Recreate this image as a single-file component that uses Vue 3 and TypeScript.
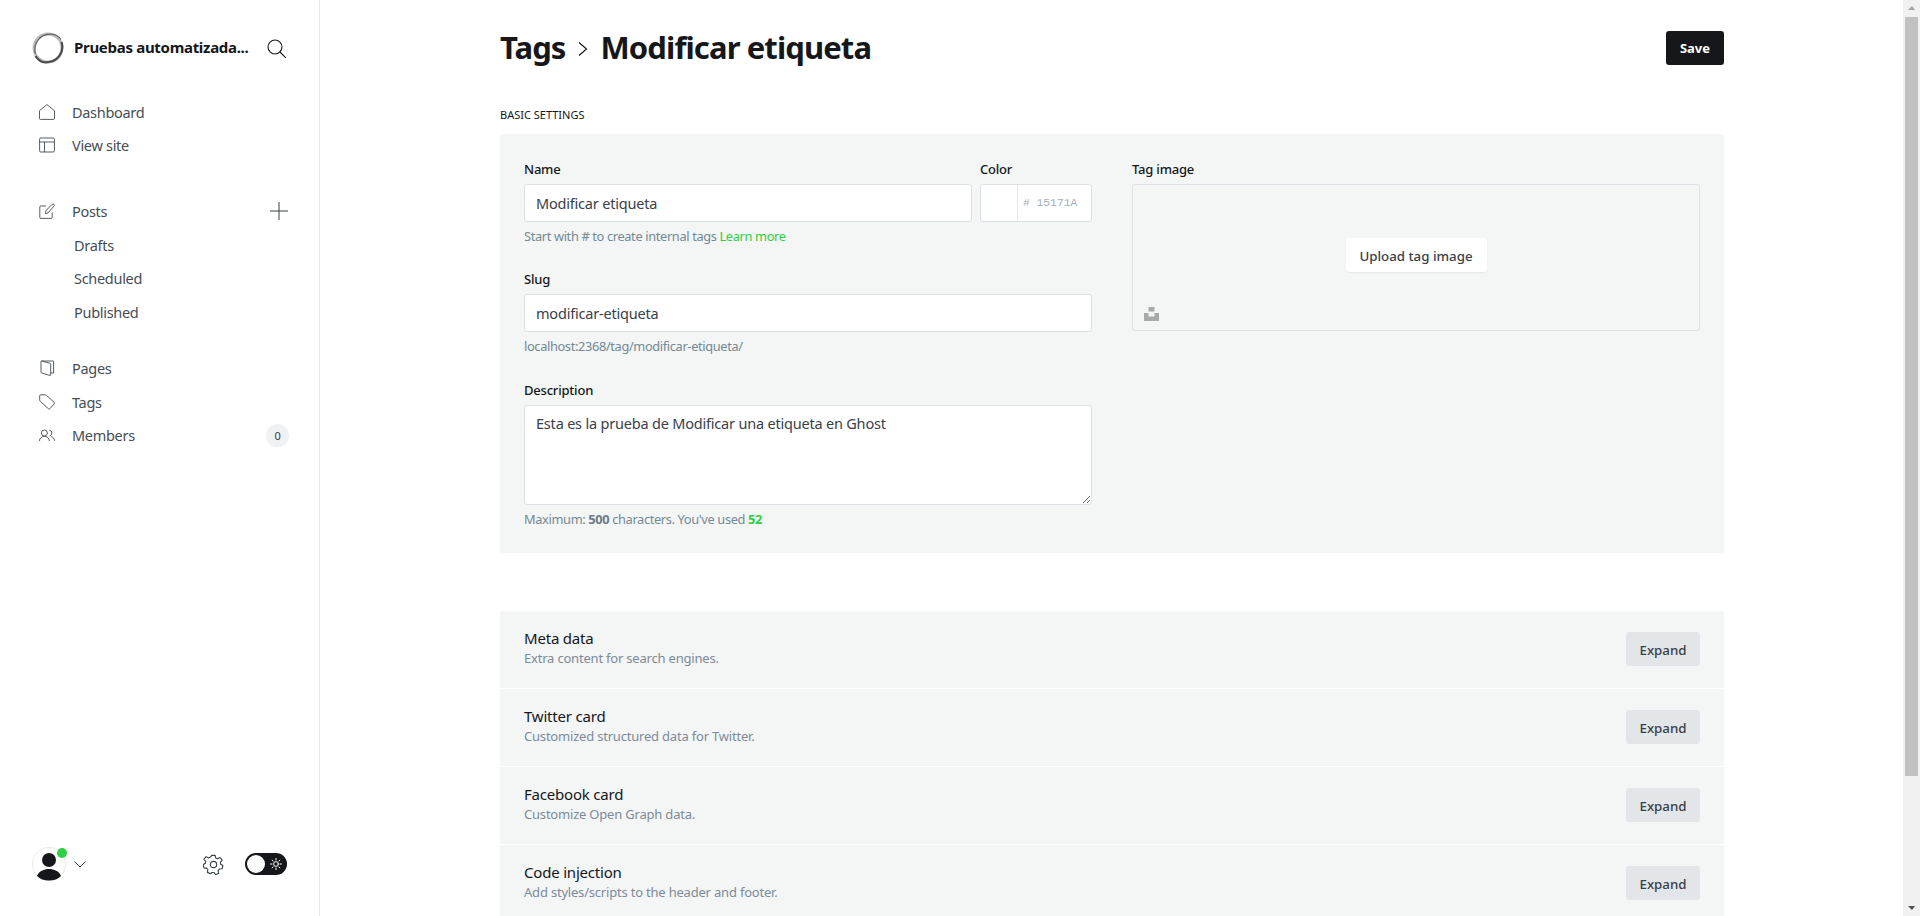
<script setup lang="ts">
interface Row { title: string; desc: string }
const rows: Row[] = [
  { title: 'Meta data', desc: 'Extra content for search engines.' },
  { title: 'Twitter card', desc: 'Customized structured data for Twitter.' },
  { title: 'Facebook card', desc: 'Customize Open Graph data.' },
  { title: 'Code injection', desc: 'Add styles/scripts to the header and footer.' },
]
const sub: string[] = ['Drafts', 'Scheduled', 'Published']
</script>

<template>
  <div class="app">
    <aside class="side">
      <div class="brand">
        <svg class="logo" width="32" height="32" viewBox="0 0 32 32" fill="none">
          <circle cx="16" cy="16" r="14" stroke="#b9b9b9" stroke-width="2.800" />
          <path d="M3.500 22C1 14 6 4 15 2.500c6-1 11 .5 14 5" stroke="#6a6a6a" stroke-width="1.300" />
          <path d="M29.500 10c3 9-3 19-13 20-5 1-10-1-13-6" stroke="#4c4c4c" stroke-width="2.200" />
        </svg>
        <span class="brand-name">Pruebas automatizada...</span>
        <svg class="search" width="19" height="19" viewBox="0 0 19 19" fill="none" stroke="#15171a" stroke-width="1.100" stroke-linecap="round">
          <circle cx="8" cy="8" r="7" />
          <path d="M13 13l5.400 5.400" />
        </svg>
      </div>

      <nav class="nav first">
        <a class="item">
          <svg class="ico" viewBox="0 0 16 16" fill="none"><path d="M.5 6.700 8 .6l7.500 6.100v7.700a1 1 0 0 1-1 1h-13a1 1 0 0 1-1-1z" /></svg>
          <span>Dashboard</span>
        </a>
        <a class="item">
          <svg class="ico" viewBox="0 0 16 16" fill="none"><rect x=".6" y="1" width="14.800" height="14" rx="1.200" /><path d="M.6 5h14.800M5.500 5v10" /></svg>
          <span>View site</span>
        </a>
      </nav>

      <nav class="nav posts">
        <a class="item">
          <svg class="ico" viewBox="0 0 16 16" fill="none"><path d="M7 3H1.800a1 1 0 0 0-1 1v10.400a1 1 0 0 0 1 1h10.400a1 1 0 0 0 1-1V9.500" /><path d="M6.500 10.600 7 7.600 13.100 1.300a1.300 1.300 0 0 1 1.800 0 1.300 1.300 0 0 1 0 1.900L8.900 10z" /></svg>
          <span>Posts</span>
          <svg class="plus" width="18" height="18" viewBox="0 0 18 18" fill="none" stroke="#394047" stroke-width="1"><path d="M9 0v18M0 9h18" /></svg>
        </a>
        <a v-for="s in sub" :key="s" class="subitem">{{ s }}</a>
      </nav>

      <nav class="nav lower">
        <a class="item">
          <svg class="ico" viewBox="0 0 16 16" fill="none"><path d="M2.500 1H14a.6.6 0 0 1 .6.6V13H11.700" /><path d="M2 1.500a.6.6 0 0 1 .8-.5L11 3.300a1 1 0 0 1 .7 1v10.500a.6.6 0 0 1-.8.6L2.800 13a1 1 0 0 1-.8-1z" /></svg>
          <span>Pages</span>
        </a>
        <a class="item">
          <svg class="ico" viewBox="0 0 16 16" fill="none"><path d="M.7 1.800A1 1 0 0 1 1.700.8h4.400a2 2 0 0 1 1.300.5l7.800 7a1 1 0 0 1 .1 1.400l-4.400 5a1 1 0 0 1-1.400.1L1.300 7.300a2 2 0 0 1-.6-1.400z" /></svg>
          <span>Tags</span>
        </a>
        <a class="item">
          <svg class="ico" viewBox="0 0 16 16" fill="none"><circle cx="5.400" cy="6" r="3" /><path d="M.5 14c0-2.800 2-4.600 4.900-4.600s5 1.800 5 4.600M10.300 3.200a2.900 2.900 0 0 1 .4 5.700M12 9.600c2 .4 3.500 2 3.500 4.200" /></svg>
          <span>Members</span>
          <span class="badge">0</span>
        </a>
      </nav>

      <div class="foot">
        <div class="avatar">
          <svg width="34" height="34" viewBox="0 0 34 34">
            <circle cx="17" cy="17" r="16.500" fill="#fff" stroke="#e8e8e8" />
            <circle cx="17" cy="13" r="7" fill="#15171a" />
            <path d="M5 29c2-5 7-7 12-7s10 2 12 7c-3 3-7 4.600-12 4.600S8 32 5 29z" fill="#15171a" />
          </svg>
          <span class="dot"></span>
        </div>
        <svg class="chev" width="12" height="7" viewBox="0 0 12 7" fill="none" stroke="#394047" stroke-width="1"><path d="m.5.5 5.500 5.500L11.500.5" /></svg>
        <svg class="gear" width="21" height="21" viewBox="0 0 24 24" fill="none" stroke="#394047" stroke-width="1.300" stroke-linejoin="round">
          <circle cx="12" cy="12" r="3.600" />
          <path d="M10.100 1.500h3.800l.6 3 2.200 1 2.700-1.500 2.500 3-2 2.300.3 2.400 2.500 1.500-.9 3.700-3 .2-1.500 1.900.6 3-3.500 1.600-1.800-2.500h-2.400L8.500 22.600 5 21l.6-3-1.500-1.900-3-.2L.2 12.200l2.500-1.500.3-2.400L1 6l2.500-3 2.700 1.500 2.200-1z" />
        </svg>
        <div class="toggle">
          <span class="knob"></span>
          <svg width="12" height="12" viewBox="0 0 12 12" fill="none" stroke="#fff" stroke-width="1" stroke-linecap="round">
            <circle cx="6" cy="6" r="2.400" />
            <path d="M6 .5v1.500M6 10v1.500M.5 6H2M10 6h1.500M2.100 2.100l1 1M8.900 8.900l1 1M2.100 9.900l1-1M8.900 3.100l1-1" />
          </svg>
        </div>
      </div>
    </aside>

    <main class="main">
      <header class="head">
        <h1 class="title">
          <span>Tags</span>
          <svg class="crumb" width="10" height="16" viewBox="0 0 10 16" fill="none" stroke="#15171a" stroke-width="1.200"><path d="m1 1.500 7.500 6.500L1 14.500" /></svg>
          <span>Modificar etiqueta</span>
        </h1>
        <button class="save">Save</button>
      </header>

      <h2 class="section">BASIC SETTINGS</h2>

      <section class="panel">
        <div class="col-left">
          <div class="name-row">
            <div class="field grow">
              <label>Name</label>
              <input class="input" value="Modificar etiqueta" />
              <p class="hint">Start with # to create internal tags <span class="green">Learn more</span></p>
            </div>
            <div class="field color">
              <label>Color</label>
              <div class="color-box">
                <span class="swatch"></span>
                <span class="hex"># 15171A</span>
              </div>
            </div>
          </div>
          <div class="field">
            <label>Slug</label>
            <input class="input" value="modificar-etiqueta" />
            <p class="hint">localhost:2368/tag/modificar-etiqueta/</p>
          </div>
          <div class="field last">
            <label>Description</label>
            <textarea class="input area">Esta es la prueba de Modificar una etiqueta en Ghost</textarea>
            <p class="hint">Maximum: <b>500</b> characters. You've used <b class="green">52</b></p>
          </div>
        </div>
        <div class="col-right">
          <label>Tag image</label>
          <div class="upload">
            <button class="upload-btn">Upload tag image</button>
            <svg class="unsplash" width="15" height="14" viewBox="0 0 15 14" fill="#a9a9a9"><path d="M4.500 0h6v4.500h-6zM0 6h4.500v3.500h6V6H15v8H0z" /></svg>
          </div>
        </div>
      </section>

      <section class="acc">
        <div v-for="r in rows" :key="r.title" class="acc-row">
          <div class="acc-text">
            <h3>{{ r.title }}</h3>
            <p>{{ r.desc }}</p>
          </div>
          <button class="expand">Expand</button>
        </div>
      </section>
    </main>

    <div class="bar">
      <span class="arrow up"></span>
      <span class="thumb"></span>
      <span class="arrow down"></span>
    </div>
  </div>
</template>

<style>
html, body { margin: 0; height: 100%; overflow: hidden; background: #fff; }
</style>

<style scoped>
* { box-sizing: border-box; }
.app {
  display: flex;
  height: 916px;
  overflow: hidden;
  font-family: "Noto Sans", "Open Sans", sans-serif;
  color: #15171a;
  letter-spacing: -0.2px;
}
.side {
  position: relative;
  flex: 0 0 320px;
  display: flex;
  flex-direction: column;
  padding: 32px 30px 0 32px;
  border-right: 1px solid #e6e8ea;
}
.brand { display: flex; align-items: center; height: 32px; }
.logo { flex: none; }
.brand-name { margin: 0 0 2px 10px; font-size: 15px; font-weight: 700; white-space: nowrap; letter-spacing: -0.3px; }
.search { margin-left: auto; margin-right: 3px; }
.nav { display: flex; flex-direction: column; }
.first { margin-top: 31px; }
.posts { margin-top: 32px; }
.lower { margin-top: 22.600px; }
.item {
  display: flex;
  align-items: center;
  height: 33.600px;
  padding-left: 7px;
  font-size: 14.500px;
  letter-spacing: -0.3px;
  color: #464d54;
}
.item > span:first-of-type { margin-left: 17px; }
.ico { width: 16px; height: 16px; flex: none; stroke: #394047; stroke-width: 0.85; stroke-linejoin: round; }
.plus { margin-left: auto; margin-right: 1px; }
.subitem { display: flex; align-items: center; height: 33.600px; padding-left: 42px; font-size: 14.500px; letter-spacing: -0.3px; color: #464d54; }
.badge {
  margin-left: auto;
  width: 23px;
  height: 23px;
  border-radius: 50%;
  background: #eff1f3;
  display: flex;
  align-items: center;
  justify-content: center;
  font-size: 11px;
  color: #394047;
}
.foot { position: absolute; left: 32px; right: 32px; top: 847px; height: 34px; display: flex; align-items: center; }
.avatar { position: relative; width: 34px; height: 34px; }
.avatar svg { display: block; }
.dot { position: absolute; left: 25px; top: 1px; width: 10px; height: 10px; border-radius: 50%; background: #30cf43; }
.chev { margin-left: 8px; margin-top: 1px; }
.gear { margin-left: auto; margin-right: 21px; }
.toggle {
  width: 42px;
  height: 22px;
  border-radius: 11px;
  background: #15171a;
  display: flex;
  align-items: center;
  padding: 0 5px 0 2px;
  justify-content: space-between;
}
.knob { width: 18px; height: 18px; border-radius: 50%; background: #fff; }

.main { flex: 1; min-width: 0; padding: 0 179px 0 180px; }
.head { display: flex; justify-content: space-between; align-items: flex-start; padding-top: 24px; height: 100px; }
.title { margin: 0; display: flex; align-items: center; font-size: 31px; font-weight: 700; line-height: 46px; letter-spacing: -0.9px; }
.crumb { margin: 4px 13px 0 12px; }
.save {
  margin-top: 7px;
  width: 58px;
  height: 34px;
  border: 0;
  border-radius: 3px;
  background: #15171a;
  color: #fff;
  font: 700 13px "Noto Sans", sans-serif;
}
.section { margin: 7px 0 0; height: 27px; font-size: 11px; font-weight: 400; line-height: 15px; letter-spacing: 0; }
.panel {
  display: flex;
  gap: 40px;
  height: 419px;
  padding: 24px 24px 0;
  border-radius: 3px;
  background: #f4f5f5;
}
label { display: block; height: 26px; font-size: 13px; font-weight: 500; line-height: 23px; }
.col-left { width: 568px; flex: none; }
.col-right { flex: 1; }
.name-row { display: flex; gap: 8px; }
.grow { flex: 1; }
.field { height: 110px; }
.last { margin-top: 1px; }
.color { width: 112px; flex: none; }
.input {
  display: block;
  width: 100%;
  height: 38px;
  padding: 0 11px;
  border: 1px solid #dde1e5;
  border-radius: 3px;
  background: #fff;
  color: #394047;
  font: 400 14.500px "Noto Sans", sans-serif;
  letter-spacing: -0.2px;
  outline: none;
}
.area { height: 100px; padding: 6px 11px; resize: vertical; line-height: 22px; }
.hint { margin: 4px 0 0; font-size: 12.800px; line-height: 20px; color: #738a94; letter-spacing: -0.35px; }
.hint b { color: #6b7b88; font-weight: 700; }
.hint .green, .green { color: #30cf43; }
.color-box { display: flex; height: 38px; border: 1px solid #dde1e5; border-radius: 3px; background: #fff; }
.swatch { width: 37px; border-right: 1px solid #e6e8ea; }
.hex { flex: 1; padding-left: 5px; font: 11.300px/36px "Liberation Mono", monospace; color: #a3adb8; letter-spacing: 0; }
.upload {
  position: relative;
  height: 147px;
  border: 1px solid #dde1e5;
  border-radius: 3px;
  display: flex;
  align-items: center;
  justify-content: center;
}
.upload-btn {
  width: 141px;
  height: 34px;
  margin-top: -5px;
  padding-top: 2px;
  border: 0;
  border-radius: 3px;
  background: #fff;
  box-shadow: 0 1px 2px rgba(0, 0, 0, 0.06);
  color: #394047;
  font: 500 13.300px "Noto Sans", sans-serif;
}
.unsplash { position: absolute; left: 11px; bottom: 9px; }
.acc { margin-top: 58px; display: flex; flex-direction: column; gap: 1px; }
.acc-row {
  display: flex;
  justify-content: space-between;
  align-items: center;
  height: 77px;
  padding: 0 24px;
  background: #f4f5f5;
}
.acc-row:first-child { border-radius: 3px 3px 0 0; }
.acc-text { margin-top: -3px; }
.acc-row h3 { margin: 0; font-size: 15px; font-weight: 400; line-height: 19px; }
.acc-row p { margin: 0; font-size: 13px; line-height: 20px; color: #7c8b9a; }
.expand {
  width: 74px;
  height: 34px;
  margin-top: -1px;
  padding-top: 2px;
  border: 0;
  border-radius: 3px;
  background: #e3e6e9;
  color: #394047;
  font: 500 13.300px "Noto Sans", sans-serif;
}
.bar { position: relative; flex: 0 0 17px; background: #f1f1f1; }
.thumb { position: absolute; left: 2px; right: 2px; top: 17px; height: 759px; background: #c1c1c1; }
.arrow { position: absolute; left: 5px; width: 0; height: 0; border-left: 4px solid transparent; border-right: 3.500px solid transparent; }
.up { top: 6px; border-bottom: 4px solid #a3a3a3; }
.down { bottom: 6px; border-top: 4px solid #505050; }
</style>
